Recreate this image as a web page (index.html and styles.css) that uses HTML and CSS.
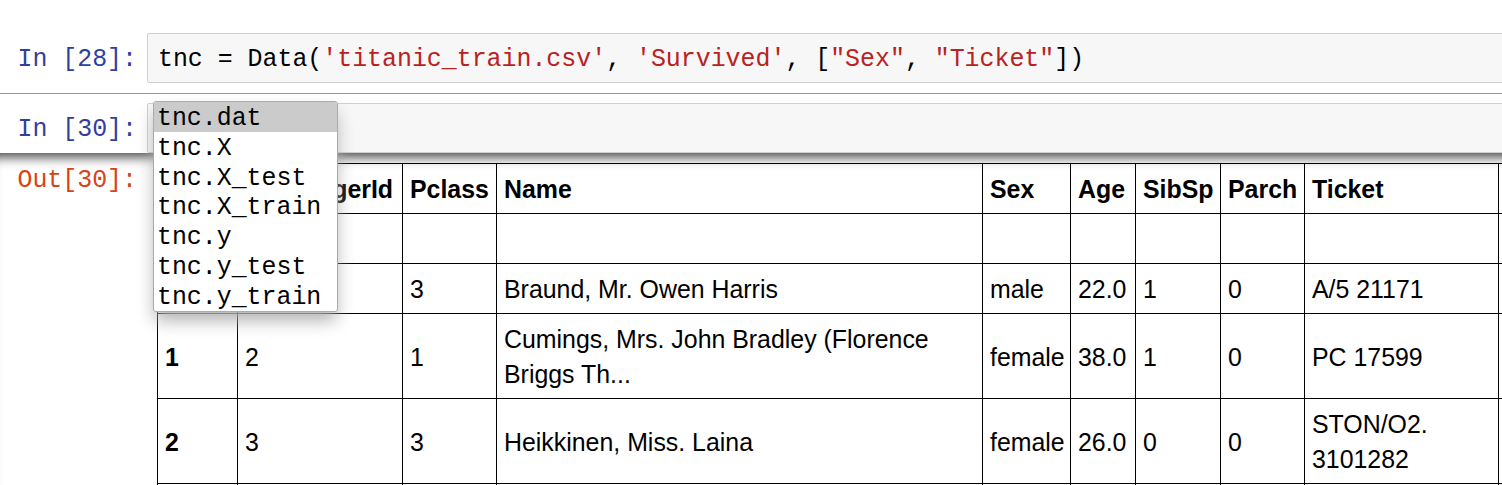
FILE: index.html
```html
<!DOCTYPE html>
<html>
<head>
<meta charset="utf-8">
<title>Notebook</title>
<link rel="stylesheet" href="styles.css">
</head>
<body>
<div class="notebook">
  <div class="cell">
    <div class="input">
      <div class="prompt in">In [28]:</div>
      <div class="input-area"><pre class="code">tnc = Data(<span class="str">'titanic_train.csv'</span>, <span class="str">'Survived'</span>, [<span class="str">"Sex"</span>, <span class="str">"Ticket"</span>])</pre></div>
    </div>
  </div>
  <div class="cell selected">
    <div class="input">
      <div class="prompt in">In [30]:</div>
      <div class="input-area">
        <pre class="code"></pre>
        <ul class="completions">
          <li class="active">tnc.dat</li>
          <li>tnc.X</li>
          <li>tnc.X_test</li>
          <li>tnc.X_train</li>
          <li>tnc.y</li>
          <li>tnc.y_test</li>
          <li>tnc.y_train</li>
        </ul>
      </div>
    </div>
    <div class="output-wrapper">
      <div class="prompt out">Out[30]:</div>
      <div class="output-subarea">
        <table class="dataframe">
          <colgroup>
            <col class="c-index"><col class="c-pid"><col class="c-pclass"><col class="c-name"><col class="c-sex"><col class="c-age"><col class="c-sibsp"><col class="c-parch"><col class="c-ticket"><col class="c-fare">
          </colgroup>
          <thead>
            <tr>
              <th></th><th>PassengerId</th><th>Pclass</th><th>Name</th><th>Sex</th><th>Age</th><th>SibSp</th><th>Parch</th><th>Ticket</th><th>Fare</th>
            </tr>
            <tr class="index-names">
              <th></th><th></th><th></th><th></th><th></th><th></th><th></th><th></th><th></th><th></th>
            </tr>
          </thead>
          <tbody>
            <tr>
              <th>0</th><td>1</td><td>3</td><td>Braund, Mr. Owen Harris</td><td>male</td><td>22.0</td><td>1</td><td>0</td><td>A/5 21171</td><td>7.2500</td>
            </tr>
            <tr>
              <th>1</th><td>2</td><td>1</td><td>Cumings, Mrs. John Bradley (Florence Briggs Th...</td><td>female</td><td>38.0</td><td>1</td><td>0</td><td>PC 17599</td><td>71.2833</td>
            </tr>
            <tr>
              <th>2</th><td>3</td><td>3</td><td>Heikkinen, Miss. Laina</td><td>female</td><td>26.0</td><td>0</td><td>0</td><td>STON/O2. 3101282</td><td>7.9250</td>
            </tr>
            <tr>
              <th>3</th><td>4</td><td>1</td><td>Futrelle, Mrs. Jacques Heath (Lily May Peel)</td><td>female</td><td>35.0</td><td>1</td><td>0</td><td>113803</td><td>53.1000</td>
            </tr>
          </tbody>
        </table>
      </div>
    </div>
  </div>
</div>
</body>
</html>
```
FILE: styles.css
```css
html, body {
  margin: 0;
  padding: 0;
  overflow: hidden;
  background: #ffffff;
}

body {
  font-family: "Liberation Sans", Arial, sans-serif;
  color: #000;
}

.notebook {
  width: 1800px;
  margin-left: -20px;
  padding-top: 23px;
}

.cell {
  border: 1px solid transparent;
  border-radius: 2px;
  padding: 9px;
}

.cell.selected {
  border-color: #66bb6a;
}

.input {
  display: flex;
}

.prompt {
  flex: 0 0 157px;
  box-sizing: border-box;
  padding: 11px 10px 0 0;
  text-align: right;
  font-family: "Liberation Mono", "DejaVu Sans Mono", monospace;
  font-size: 24.9px;
  line-height: 30px;
  white-space: pre;
}

.prompt.in {
  color: #303f9f;
}

.prompt.out {
  color: #d84315;
  padding-top: 12px;
}

.input-area {
  flex: 1;
  position: relative;
  background: #f7f7f7;
  border: 1px solid #cfcfcf;
  border-radius: 2px;
}

.code {
  margin: 0;
  padding: 10px 10px 8px;
  min-height: 30px;
  font-family: "Liberation Mono", "DejaVu Sans Mono", monospace;
  font-size: 24.9px;
  line-height: 30px;
  color: #000;
}

.str {
  color: #ba2121;
}

.completions {
  position: absolute;
  left: 5px;
  top: -3px;
  z-index: 10;
  width: 183px;
  margin: 0;
  padding: 0;
  list-style: none;
  background: #fff;
  border: 1px solid #ababab;
  border-radius: 3px;
  box-shadow: 0 10px 18px -2px #adadad;
  overflow: hidden;
  font-family: "Liberation Mono", "DejaVu Sans Mono", monospace;
  font-size: 24.9px;
  color: #000;
}

.completions li {
  padding: 4px 0 0 3px;
  line-height: 25.8px;
  white-space: pre;
}

.completions li.active {
  background: #cbcbcb;
}

.output-wrapper {
  display: flex;
  border-radius: 2px;
  box-shadow: inset 0 4px 12px rgba(0, 0, 0, 0.75);
}

.output-subarea {
  flex: 1;
  padding: 10px;
}

.dataframe {
  border-collapse: collapse;
  table-layout: fixed;
  width: 1461px;
  border: 1px solid #000;
  font-size: 24.9px;
  line-height: 35px;
  color: #000;
}

.dataframe th,
.dataframe td {
  border: 1px solid #000;
  padding: 8px 7px 6px;
  text-align: left;
  vertical-align: middle;
  white-space: normal;
}

.dataframe th {
  font-weight: bold;
}

.dataframe td {
  font-weight: normal;
}

.index-names {
  height: 50px;
}

.c-index { width: 80px; }
.c-pid { width: 165px; }
.c-pclass { width: 94px; }
.c-name { width: 486px; }
.c-sex { width: 88px; }
.c-age { width: 65px; }
.c-sibsp { width: 85px; }
.c-parch { width: 84px; }
.c-ticket { width: 194px; }
.c-fare { width: 120px; }
```
